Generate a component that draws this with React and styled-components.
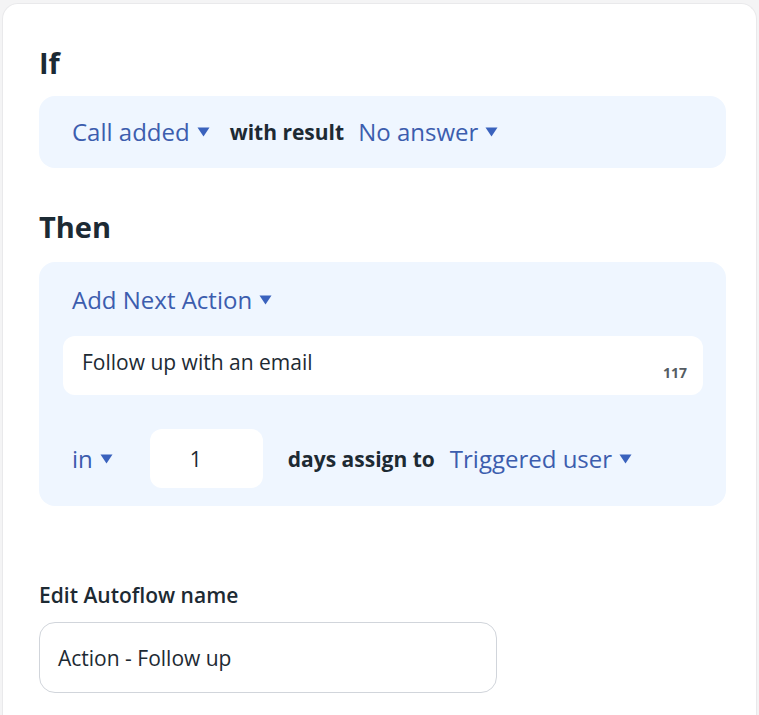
import React from 'react'
import styled, { createGlobalStyle } from 'styled-components'

const GlobalStyle = createGlobalStyle`
  body {
    margin: 0;
    background: #f4f4f5;
    font-family: "Open Sans", "Noto Sans", sans-serif;
    color: #1d2a33;
  }
`

const Card = styled.div`
  box-sizing: border-box;
  margin: 3px 2px 0 2px;
  min-height: 712px;
  background: #fff;
  border: 1px solid #e9e9eb;
  border-bottom: none;
  border-radius: 16px 16px 0 0;
  padding: 38px 30px 0 36px;
`

const Heading = styled.h2`
  margin: ${(p) => p.top || 0}px 0 0;
  font-size: 29px;
  line-height: 42px;
  font-weight: 700;
  color: #1c2a34;
`

const Panel = styled.div`
  background: #eff6ff;
  border-radius: 16px;
  padding: ${(p) => p.padding};
  margin-top: ${(p) => p.top}px;
  display: flex;
  flex-direction: column;
`

const Row = styled.div`
  display: flex;
  align-items: center;
  padding-left: ${(p) => p.indent || 0}px;
  margin-top: ${(p) => p.top || 0}px;
`

const Select = styled.span`
  display: inline-flex;
  align-items: center;
  gap: 7px;
  font-size: 24px;
  line-height: 32px;
  color: #3c5dae;
  cursor: pointer;
  margin-right: ${(p) => p.gapRight || 0}px;
`

const Bold = styled.span`
  font-size: 21px;
  font-weight: 700;
  color: #1d2a33;
  margin-right: ${(p) => p.gapRight || 0}px;
`

const TextBox = styled.div`
  position: relative;
  box-sizing: border-box;
  height: 59px;
  background: #fff;
  border-radius: 12px;
  padding: 12px 19px;
  font-size: 21px;
  line-height: 28px;
  color: #1d2a33;
  margin-top: 20px;
`

const Counter = styled.span`
  position: absolute;
  right: 16px;
  bottom: 15px;
  font-size: 14px;
  font-weight: 700;
  color: #555c62;
  line-height: 1;
`

const NumberBox = styled.div`
  box-sizing: border-box;
  width: 113px;
  height: 59px;
  background: #fff;
  border-radius: 12px;
  display: flex;
  align-items: center;
  padding-left: 40px;
  font-size: 21px;
  color: #1d2a33;
  margin-right: 25px;
`

const Label = styled.div`
  margin-top: 76px;
  font-size: 21px;
  line-height: 26px;
  font-weight: 600;
  color: #1d2a33;
`

const NameInput = styled.div`
  box-sizing: border-box;
  width: 458px;
  height: 71px;
  margin-top: 14px;
  border: 1px solid #d1d5db;
  border-radius: 16px;
  display: flex;
  align-items: center;
  padding-left: 18px;
  font-size: 21px;
  color: #1d2a33;
`

function Caret() {
  return (
    <svg width="13" height="10" viewBox="0 0 13 10" aria-hidden="true">
      <path d="M0.5 0.5 H12.5 L6.5 9.5 Z" fill="#3a62bd" />
    </svg>
  )
}

export default function App() {
  return (
    <>
      <GlobalStyle />
      <Card>
        <Heading>If</Heading>
        <Panel padding="20px 33px" top={12}>
          <Row>
            <Select gapRight={20}>Call added <Caret /></Select>
            <Bold gapRight={14}>with result</Bold>
            <Select>No answer <Caret /></Select>
          </Row>
        </Panel>

        <Heading top={38}>Then</Heading>
        <Panel padding="22px 23px 18px 24px" top={14}>
          <Row indent={9}>
            <Select>Add Next Action <Caret /></Select>
          </Row>
          <TextBox>
            Follow up with an email
            <Counter>117</Counter>
          </TextBox>
          <Row indent={9} top={34}>
            <Select gapRight={37}>in <Caret /></Select>
            <NumberBox>1</NumberBox>
            <Bold gapRight={15}>days assign to</Bold>
            <Select>Triggered user <Caret /></Select>
          </Row>
        </Panel>

        <Label>Edit Autoflow name</Label>
        <NameInput>Action - Follow up</NameInput>
      </Card>
    </>
  )
}
